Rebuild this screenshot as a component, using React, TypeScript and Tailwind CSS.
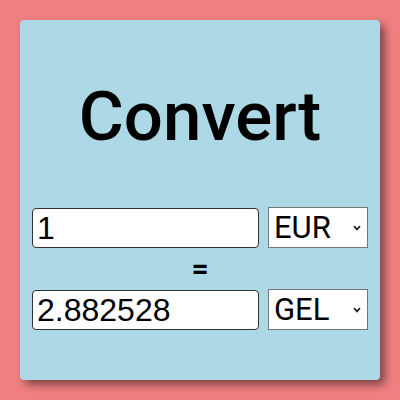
import React, { useState } from "react";

const rates: Record<string, number> = { EUR: 1, GEL: 2.882528, USD: 1.08 };
const currencies = ["EUR", "GEL", "USD"];

function CurrencySelect({ value, onChange }: { value: string; onChange: (v: string) => void }) {
  return (
    <div className="relative w-[101px] h-[41px]">
      <select
        value={value}
        onChange={(e) => onChange(e.target.value)}
        className="appearance-none w-full h-full bg-white border border-[#767676] rounded-none pl-[5px] py-0 text-[31px] leading-[39px] text-black outline-none"
      >
        {currencies.map((c) => (
          <option key={c}>{c}</option>
        ))}
      </select>
      <svg
        className="absolute right-[7px] top-[18px] w-[8px] h-[6px] pointer-events-none"
        viewBox="0 0 8 6"
        fill="none"
        stroke="#222"
        strokeWidth={1.7}
        aria-hidden="true"
      >
        <path d="M1 1.2 4 4.4 7 1.2" />
      </svg>
    </div>
  );
}

export default function App() {
  const [amount, setAmount] = useState("1");
  const [from, setFrom] = useState("EUR");
  const [to, setTo] = useState("GEL");
  const result = ((parseFloat(amount) || 0) * rates[to]) / rates[from];

  return (
    <div className="w-[400px] h-[400px] bg-[#f08080] p-5 font-['Roboto',sans-serif]">
      <div className="h-[360px] w-[360px] bg-[#add8e6] rounded-[4px] shadow-[5px_5px_8px_rgba(0,0,0,0.45)] flex flex-col items-center pt-[55px]">
        <h1 className="text-[69px] leading-[84px] font-medium text-black">Convert</h1>
        <div className="mt-[48px] flex flex-col w-[336px]">
          <div className="flex gap-[9px] items-center">
            <input
              value={amount}
              onChange={(e) => setAmount(e.target.value)}
              className="w-[227px] h-[40px] bg-white border border-[#333] rounded-[4px] px-[4px] text-[32px] font-['Liberation_Sans',Arial,sans-serif] text-black outline-none"
            />
            <CurrencySelect value={from} onChange={setFrom} />
          </div>
          <div className="h-[41px] flex items-center justify-center text-[30px] font-bold leading-none">=</div>
          <div className="flex gap-[9px] items-center">
            <input
              readOnly
              value={result.toFixed(6)}
              className="w-[227px] h-[40px] bg-white border border-[#333] rounded-[4px] px-[4px] text-[32px] font-['Liberation_Sans',Arial,sans-serif] text-black outline-none"
            />
            <CurrencySelect value={to} onChange={setTo} />
          </div>
        </div>
      </div>
    </div>
  );
}
